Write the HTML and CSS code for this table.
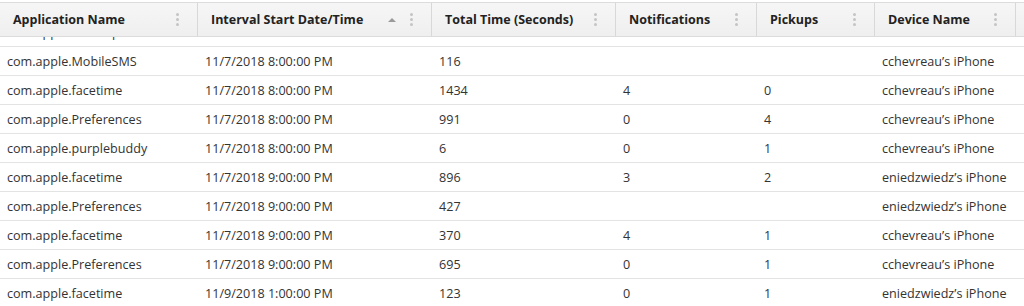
FILE: index.html
```html
<!DOCTYPE html>
<html>
<head>
<meta charset="utf-8">
<link rel="stylesheet" href="styles.css">
</head>
<body>
<div class="grid">
  <div class="head">
    <div class="hc c1"><span class="ht">Application Name</span><span class="kebab"><i></i><i></i><i></i></span></div>
    <div class="hc c2"><span class="ht">Interval Start Date/Time</span><span class="sort"></span><span class="kebab"><i></i><i></i><i></i></span></div>
    <div class="hc c3"><span class="ht">Total Time (Seconds)</span><span class="kebab"><i></i><i></i><i></i></span></div>
    <div class="hc c4"><span class="ht">Notifications</span><span class="kebab"><i></i><i></i><i></i></span></div>
    <div class="hc c5"><span class="ht">Pickups</span><span class="kebab"><i></i><i></i><i></i></span></div>
    <div class="hc c6"><span class="ht">Device Name</span><span class="kebab"><i></i><i></i><i></i></span></div>
    <div class="hc c7"></div>
  </div>
  <div class="body">
    <div class="rows">
      <div class="row"><div class="c c1">com.apple.mobilephone</div><div class="c c2">11/7/2018 8:00:00 PM</div><div class="c c3">88</div><div class="c c4"></div><div class="c c5"></div><div class="c c6">cchevreau’s iPhone</div></div>
      <div class="row"><div class="c c1">com.apple.MobileSMS</div><div class="c c2">11/7/2018 8:00:00 PM</div><div class="c c3">116</div><div class="c c4"></div><div class="c c5"></div><div class="c c6">cchevreau’s iPhone</div></div>
      <div class="row"><div class="c c1">com.apple.facetime</div><div class="c c2">11/7/2018 8:00:00 PM</div><div class="c c3">1434</div><div class="c c4">4</div><div class="c c5">0</div><div class="c c6">cchevreau’s iPhone</div></div>
      <div class="row"><div class="c c1">com.apple.Preferences</div><div class="c c2">11/7/2018 8:00:00 PM</div><div class="c c3">991</div><div class="c c4">0</div><div class="c c5">4</div><div class="c c6">cchevreau’s iPhone</div></div>
      <div class="row"><div class="c c1">com.apple.purplebuddy</div><div class="c c2">11/7/2018 8:00:00 PM</div><div class="c c3">6</div><div class="c c4">0</div><div class="c c5">1</div><div class="c c6">cchevreau’s iPhone</div></div>
      <div class="row"><div class="c c1">com.apple.facetime</div><div class="c c2">11/7/2018 9:00:00 PM</div><div class="c c3">896</div><div class="c c4">3</div><div class="c c5">2</div><div class="c c6">eniedzwiedz’s iPhone</div></div>
      <div class="row"><div class="c c1">com.apple.Preferences</div><div class="c c2">11/7/2018 9:00:00 PM</div><div class="c c3">427</div><div class="c c4"></div><div class="c c5"></div><div class="c c6">eniedzwiedz’s iPhone</div></div>
      <div class="row"><div class="c c1">com.apple.facetime</div><div class="c c2">11/7/2018 9:00:00 PM</div><div class="c c3">370</div><div class="c c4">4</div><div class="c c5">1</div><div class="c c6">cchevreau’s iPhone</div></div>
      <div class="row"><div class="c c1">com.apple.Preferences</div><div class="c c2">11/7/2018 9:00:00 PM</div><div class="c c3">695</div><div class="c c4">0</div><div class="c c5">1</div><div class="c c6">cchevreau’s iPhone</div></div>
      <div class="row"><div class="c c1">com.apple.facetime</div><div class="c c2">11/9/2018 1:00:00 PM</div><div class="c c3">123</div><div class="c c4">0</div><div class="c c5">1</div><div class="c c6">eniedzwiedz’s iPhone</div></div>
    </div>
  </div>
</div>
</body>
</html>
```

FILE: styles.css
```css
* { box-sizing: border-box; }
html, body { margin: 0; padding: 0; background: #fff; }
body {
  font-family: "Open Sans", "Noto Sans", "Liberation Sans", sans-serif;
  font-size: 12.6px;
  color: #333;
  width: 1024px;
  height: 306px;
  overflow: hidden;
}
.grid { padding-top: 2px; }
.head {
  display: flex;
  height: 35px;
  border-top: 1px solid #dcdcdc;
  border-bottom: 1px solid #dcdcdc;
  background: linear-gradient(#f6f6f6, #efefef);
}
.hc {
  display: flex;
  align-items: center;
  flex-shrink: 0;
  border-right: 1px solid #d8d8d8;
  padding-left: 13px;
  padding-right: 18px;
  font-weight: 700;
  color: #222;
  font-size: 12.5px;
}
.hc .ht { flex: 1; white-space: nowrap; }
.c1 { width: 198px; flex-shrink: 0; }
.c2 { width: 234px; flex-shrink: 0; }
.c3 { width: 184px; flex-shrink: 0; }
.c4 { width: 141px; flex-shrink: 0; }
.c5 { width: 118px; flex-shrink: 0; }
.c6 { width: 141px; flex-shrink: 0; }
.hc.c7 { flex: 1 1 auto; width: auto; padding: 0; border-right: none; }
.kebab { display: flex; flex-direction: column; gap: 2px; width: 3px; }
.kebab i { display: block; width: 3px; height: 3px; border-radius: 50%; background: #c4c4c4; }
.sort {
  width: 0; height: 0;
  border-left: 4px solid transparent;
  border-right: 4px solid transparent;
  border-bottom: 4px solid #9a9a9a;
  margin-right: 14px;
}
.body { height: 269px; overflow: hidden; }
.rows { margin-top: -19px; }
.row {
  display: flex;
  height: 29px;
  border-bottom: 1px solid #e3e3e3;
  align-items: center;
}
.c { padding-left: 7px; white-space: nowrap; }
```
